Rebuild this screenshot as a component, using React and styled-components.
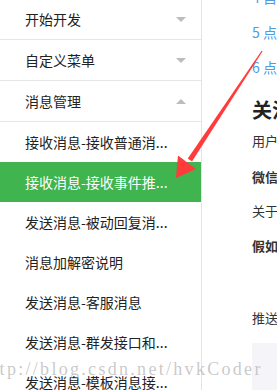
import React from "react";
import styled, { createGlobalStyle } from "styled-components";

const Global = createGlobalStyle`
  html, body { margin: 0; padding: 0; background: #fff; }
  body {
    width: 277px; height: 390px; overflow: hidden;
    font-family: "Noto Sans CJK SC", "Noto Sans", sans-serif;
    color: #333;
  }
  * { box-sizing: border-box; }
`;

const Page = styled.div`
  position: relative;
  width: 277px;
  height: 390px;
  overflow: hidden;
  display: flex;
`;

const Sidebar = styled.nav`
  width: 202px;
  flex: 0 0 202px;
  border-right: 1px solid #e4e4e4;
  display: flex;
  flex-direction: column;
`;

const GroupRow = styled.div`
  height: 41px;
  flex: 0 0 41px;
  border-bottom: 1px solid #e6e6e6;
  display: flex;
  align-items: center;
  justify-content: space-between;
  padding: 0 15px 0 25px;
  font-size: 14px;
  color: #222;
  margin-top: ${(p) => (p.$first ? "-1px" : "0")};
`;

const Caret = styled.span`
  width: 0;
  height: 0;
  border-left: 5px solid transparent;
  border-right: 5px solid transparent;
  ${(p) =>
    p.$up
      ? "border-bottom: 5px solid #bcbcbc;"
      : "border-top: 5px solid #bcbcbc;"}
`;

const SubItem = styled.div`
  height: 40px;
  flex: 0 0 40px;
  display: flex;
  align-items: center;
  padding-left: 25px;
  font-size: 14px;
  white-space: nowrap;
  color: ${(p) => (p.$active ? "#fff" : "#222")};
  background: ${(p) => (p.$active ? "#3fb44f" : "transparent")};
`;

const Content = styled.main`
  flex: 1;
  min-width: 0;
  padding-left: 50px;
  display: flex;
  flex-direction: column;
  overflow: hidden;
  white-space: nowrap;
`;

const LinkList = styled.div`
  margin-top: -20px;
  display: flex;
  flex-direction: column;
`;

const LinkItem = styled.a`
  height: 35px;
  line-height: 35px;
  font-size: 14px;
  color: #4b9be6;
  text-decoration: none;
`;

const Heading = styled.h2`
  margin: 10px 0 0;
  font-size: 20px;
  line-height: 30px;
  font-weight: 700;
  color: #222;
`;

const Para = styled.p`
  margin: ${(p) => p.$mt}px 0 0;
  font-size: 13px;
  line-height: 20px;
  color: #333;
  font-weight: ${(p) => (p.$bold ? 700 : 400)};
`;

const CodeBox = styled.pre`
  margin: 15px 0 0;
  flex: 1;
  min-height: 60px;
  background: #f5f5f9;
`;

const Watermark = styled.div`
  position: absolute;
  left: -19px;
  top: 358px;
  font-family: "Liberation Serif", serif;
  font-size: 18px;
  letter-spacing: 2.3px;
  line-height: 22px;
  color: rgba(165, 165, 165, 0.6);
  white-space: nowrap;
  pointer-events: none;
`;

const ArrowLayer = styled.svg`
  position: absolute;
  left: 0;
  top: 0;
  pointer-events: none;
`;

const groups = ["开始开发", "自定义菜单"];
const subs = [
  "接收消息-接收普通消...",
  "接收消息-接收事件推...",
  "发送消息-被动回复消...",
  "消息加解密说明",
  "发送消息-客服消息",
  "发送消息-群发接口和...",
  "发送消息-模板消息接...",
];

export default function App() {
  return (
    <>
      <Global />
      <Page>
        <Sidebar>
          {groups.map((g, i) => (
            <GroupRow key={g} $first={i === 0}>
              {g}
              <Caret />
            </GroupRow>
          ))}
          <GroupRow>
            消息管理
            <Caret $up />
          </GroupRow>
          {subs.map((s, i) => (
            <SubItem key={s} $active={i === 1}>
              {s}
            </SubItem>
          ))}
        </Sidebar>
        <Content>
          <LinkList>
            <LinkItem href="#">4 自定义菜单事件</LinkItem>
            <LinkItem href="#">5 点击菜单拉取消息时的事件推送</LinkItem>
            <LinkItem href="#">6 点击菜单跳转链接时的事件推送</LinkItem>
          </LinkList>
          <Heading>关注/取消关注事件</Heading>
          <Para $mt={6}>用户在关注与取消关注公众号时，微信会把这个事件推送</Para>
          <Para $mt={16} $bold>
            微信服务器在五秒内收不到响应会断掉连接
          </Para>
          <Para $mt={14}>关于重试的消息排重，推荐使用FromUserName</Para>
          <Para $mt={15} $bold>
            假如服务器无法保证在五秒内处理并回复
          </Para>
          <Para $mt={52}>推送XML数据包示例：</Para>
          <CodeBox />
        </Content>
        <Watermark>http://blog.csdn.net/hvkCoder</Watermark>
        <ArrowLayer width="277" height="390" viewBox="0 0 277 390">
          <polygon
            points="261.6,50.7 262.6,51.3 192,161.5 187.8,158.6"
            fill="#ff3b3b"
          />
          <polygon points="176,178 178,155.5 196,169" fill="#ff3b3b" />
        </ArrowLayer>
      </Page>
    </>
  );
}
